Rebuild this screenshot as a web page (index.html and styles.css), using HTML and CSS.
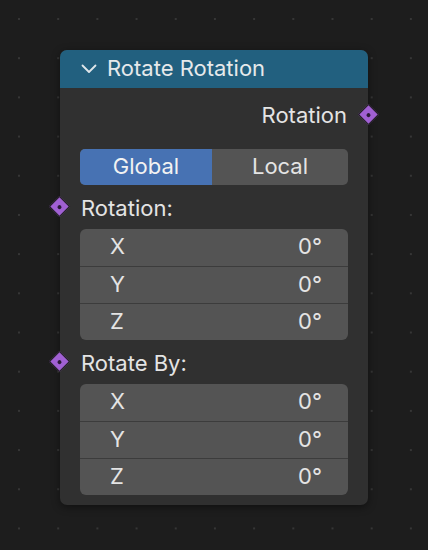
FILE: index.html
```html
<!DOCTYPE html>
<html lang="en">

<head>
    <meta charset="UTF-8">
    <meta name="viewport" content="width=device-width, initial-scale=1.0">
    <title>Rotate Rotation</title>
    <link rel="stylesheet" href="styles.css">
</head>

<body>
    <div class="node">
        <div class="node-header">
            <svg class="chevron" width="16" height="10" viewBox="0 0 16 10">
                <path d="M1.5 1.5 L8 8 L14.5 1.5" fill="none" stroke="#dfe6ea" stroke-width="1.8" stroke-linecap="round" stroke-linejoin="round" />
            </svg>
            <span>Rotate Rotation</span>
        </div>
        <div class="node-body">
            <div class="output-row">
                <span>Rotation</span>
                <span class="socket socket-right"></span>
            </div>
            <div class="toggle">
                <div class="toggle-item active">Global</div>
                <div class="toggle-item">Local</div>
            </div>
            <div class="input-label">
                <span class="socket socket-left"></span>
                <span>Rotation:</span>
            </div>
            <div class="field-group">
                <div class="field"><span>X</span><span>0°</span></div>
                <div class="field"><span>Y</span><span>0°</span></div>
                <div class="field"><span>Z</span><span>0°</span></div>
            </div>
            <div class="input-label">
                <span class="socket socket-left"></span>
                <span>Rotate By:</span>
            </div>
            <div class="field-group">
                <div class="field"><span>X</span><span>0°</span></div>
                <div class="field"><span>Y</span><span>0°</span></div>
                <div class="field"><span>Z</span><span>0°</span></div>
            </div>
        </div>
    </div>
</body>

</html>
```

FILE: styles.css
```css
body {
    margin: 0;
    padding: 50px 0 0 60px;
    height: 550px;
    box-sizing: border-box;
    font-family: Inter, "Noto Sans", sans-serif;
    font-size: 22px;
    color: #e4e4e4;
    background-color: #1d1d1d;
    background-image: radial-gradient(circle, #363636 0.8px, transparent 1.3px);
    background-size: 39.2px 39.2px;
    background-position: -0.6px -0.6px;
    overflow: hidden;
}

.node {
    width: 308px;
    background-color: #303030;
    border-radius: 7px;
    box-shadow: 0 2px 8px rgba(0, 0, 0, 0.45);
}

.node-header {
    height: 38px;
    display: flex;
    align-items: center;
    gap: 10px;
    padding: 0 0 3px 21px;
    box-sizing: border-box;
    background-color: #22607f;
    border-radius: 7px 7px 0 0;
    color: #e6e9eb;
}

.chevron {
    margin-top: 2px;
}

.node-body {
    padding: 8px 20px 10px 20px;
}

.output-row {
    height: 38px;
    display: flex;
    align-items: center;
    justify-content: flex-end;
    position: relative;
    padding: 0 1px 1px 0;
    box-sizing: border-box;
}

.socket {
    position: absolute;
    width: 13px;
    height: 13px;
    background-color: #a060d3;
    border: 1.5px solid #1a1a1a;
    transform: rotate(45deg);
    top: 50%;
    margin-top: -8px;
}

.socket::after {
    content: "";
    position: absolute;
    left: 50%;
    top: 50%;
    width: 4px;
    height: 4px;
    margin: -2px 0 0 -2px;
    background-color: #2a1a38;
    border-radius: 50%;
}

.socket-right {
    right: -28px;
}

.socket-left {
    left: -28px;
}

.toggle {
    margin-top: 15px;
    height: 36px;
    display: flex;
    border-radius: 5px;
    overflow: hidden;
    background-color: #545454;
}

.toggle-item {
    flex: 1;
    display: flex;
    align-items: center;
    justify-content: center;
    padding-bottom: 2px;
}

.toggle-item.active {
    flex: 0 0 132px;
    background-color: #4772b3;
    color: #f2f2f2;
}

.input-label {
    height: 44px;
    display: flex;
    align-items: center;
    position: relative;
    padding-left: 1px;
    padding-top: 1px;
    box-sizing: border-box;
}

.field-group {
    background-color: #545454;
    border-radius: 6px;
    overflow: hidden;
}

.field {
    height: 37px;
    display: flex;
    align-items: center;
    justify-content: space-between;
    padding: 0 26px 3px 30px;
    box-sizing: border-box;
}

.field + .field {
    border-top: 1px solid #3c3c3c;
}
```
